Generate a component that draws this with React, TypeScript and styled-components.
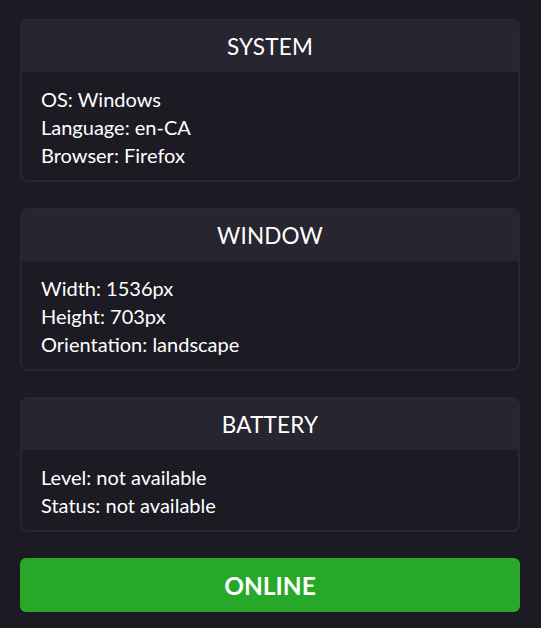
import React from 'react';
import styled, { createGlobalStyle } from 'styled-components';

const Global = createGlobalStyle`
  html, body {
    margin: 0;
    padding: 0;
    background: #1c1a23;
    font-family: Lato, "Open Sans", sans-serif;
    color: #ffffff;
  }
`;

const Main = styled.div`
  padding: 19px 21px 15px 20px;
  display: flex;
  flex-direction: column;
  gap: 26px;
`;

const Card = styled.div`
  border: 2px solid #29272f;
  border-radius: 8px;
  background: #1c1a22;
  overflow: hidden;
`;

const Head = styled.div`
  background: #27252f;
  height: 51px;
  display: flex;
  align-items: center;
  justify-content: center;
  font-size: 22.5px;
  letter-spacing: 0.2px;
`;

const Body = styled.div`
  padding: 13px 19px 11px;

  p {
    margin: 0;
    font-size: 20px;
    line-height: 28px;
  }
`;

const Status = styled.div<{ $online: boolean }>`
  background: ${(p) => (p.$online ? '#28a828' : '#b02a2a')};
  border-radius: 6px;
  height: 54px;
  display: flex;
  align-items: center;
  justify-content: center;
  font-weight: 700;
  font-size: 24.5px;
`;

const sections = [
  { title: 'SYSTEM', rows: ['OS: Windows', 'Language: en-CA', 'Browser: Firefox'] },
  { title: 'WINDOW', rows: ['Width: 1536px', 'Height: 703px', 'Orientation: landscape'] },
  { title: 'BATTERY', rows: ['Level: not available', 'Status: not available'] },
];

const App = () => {
  return (
    <Main>
      <Global />
      {sections.map((s) => (
        <Card key={s.title}>
          <Head>{s.title}</Head>
          <Body>
            {s.rows.map((r) => (
              <p key={r}>{r}</p>
            ))}
          </Body>
        </Card>
      ))}
      <Status $online={true}>ONLINE</Status>
    </Main>
  );
};

export default App;
